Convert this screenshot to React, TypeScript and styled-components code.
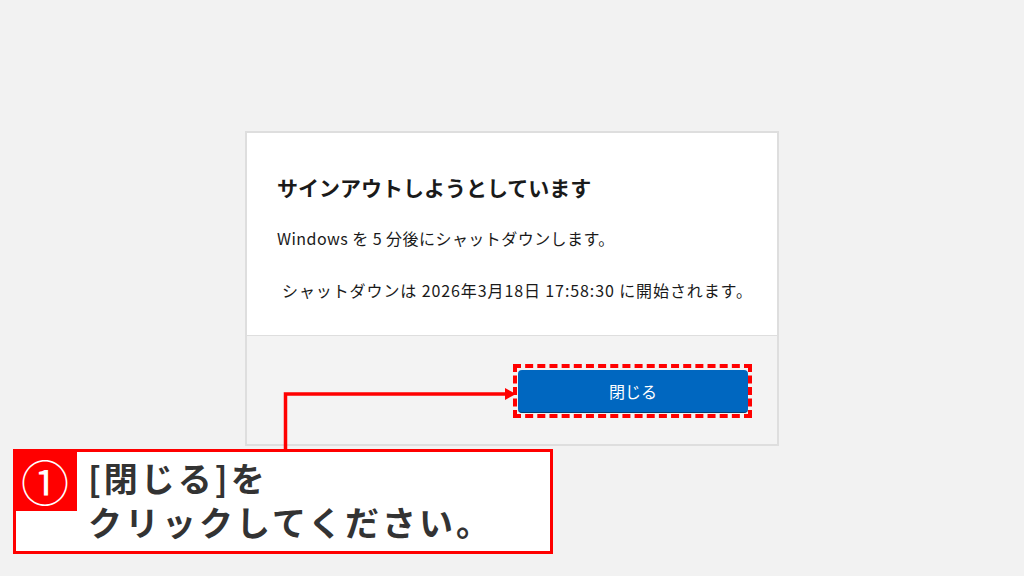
import styled, { createGlobalStyle } from 'styled-components';

const GlobalStyle = createGlobalStyle`
  html, body {
    margin: 0;
    padding: 0;
    background: #f2f2f2;
  }
  body {
    font-family: "Noto Sans CJK JP", "Noto Sans", sans-serif;
  }
`;

const Stage = styled.div`
  position: relative;
  width: 1024px;
  height: 576px;
  display: flex;
  align-items: center;
  justify-content: center;
  overflow: hidden;
`;

const Dialog = styled.div`
  width: 534px;
  height: 315px;
  box-sizing: border-box;
  border: 2px solid #dedede;
  display: flex;
  flex-direction: column;
  margin-top: 1px;
`;

const Content = styled.div`
  background: #ffffff;
  height: 202px;
  box-sizing: border-box;
  padding: 39px 0 0 30px;
  color: #1a1a1a;
`;

const Title = styled.h1`
  margin: 0;
  font-size: 21px;
  line-height: 30px;
  font-weight: 700;
`;

const Message = styled.p<{ $indent?: number }>`
  margin: ${({ $indent }) => ($indent ? '28px' : '24px')} 0 0 ${({ $indent }) => $indent ?? 0}px;
  font-size: 16px;
  line-height: 24px;
  white-space: nowrap;
  letter-spacing: ${({ $indent }) => ($indent ? '0.9px' : '0.45px')};
`;

const Footer = styled.div`
  flex: 1;
  background: #f3f3f3;
  border-top: 1px solid #dedede;
  display: flex;
  justify-content: flex-end;
  align-items: flex-start;
  padding: 28px 25px 0 0;
`;

const Highlight = styled.div`
  border: 4px dashed #ff0000;
  padding: 2px 0 1px 1px;
  display: flex;
`;

const PrimaryButton = styled.button`
  width: 230px;
  height: 43px;
  border: none;
  border-bottom: 1px solid #003e73;
  border-radius: 4px;
  background: #0067c0;
  color: #ffffff;
  font-family: "Noto Sans CJK JP", sans-serif;
  font-size: 16px;
  cursor: pointer;
`;

const Arrow = styled.svg`
  position: absolute;
  left: 0;
  top: 0;
  pointer-events: none;
`;

const Callout = styled.div`
  position: absolute;
  left: 13px;
  top: 449px;
  width: 540px;
  height: 105px;
  box-sizing: border-box;
  border: 3px solid #ff0000;
  background: #ffffff;
  display: flex;
  align-items: flex-start;
`;

const StepBadge = styled.div`
  width: 64px;
  height: 62px;
  margin: -3px 0 0 -3px;
  background: #ff0000;
  color: #ffffff;
  display: flex;
  align-items: center;
  justify-content: center;
  font-size: 48px;
  line-height: 1;
  flex-shrink: 0;
`;

const CalloutText = styled.div`
  padding: 4px 0 0 11px;
  font-size: 34px;
  line-height: 44px;
  font-weight: 700;
  letter-spacing: 3px;
  color: #333333;
`;

export default function App() {
  return (
    <>
      <GlobalStyle />
      <Stage>
        <Dialog>
          <Content>
            <Title>サインアウトしようとしています</Title>
            <Message>Windows を 5 分後にシャットダウンします。</Message>
            <Message $indent={5}>シャットダウンは 2026年3月18日 17:58:30 に開始されます。</Message>
          </Content>
          <Footer>
            <Highlight>
              <PrimaryButton>閉じる</PrimaryButton>
            </Highlight>
          </Footer>
        </Dialog>
        <Arrow width="1024" height="576" viewBox="0 0 1024 576">
          <polyline points="285.5,450 285.5,394 508,394" fill="none" stroke="#ff0000" strokeWidth="3.5" />
          <polygon points="505,388 516,394 505,400" fill="#ff0000" />
        </Arrow>
        <Callout>
          <StepBadge>①</StepBadge>
          <CalloutText>
            [閉じる]を
            <br />
            クリックしてください。
          </CalloutText>
        </Callout>
      </Stage>
    </>
  );
}
